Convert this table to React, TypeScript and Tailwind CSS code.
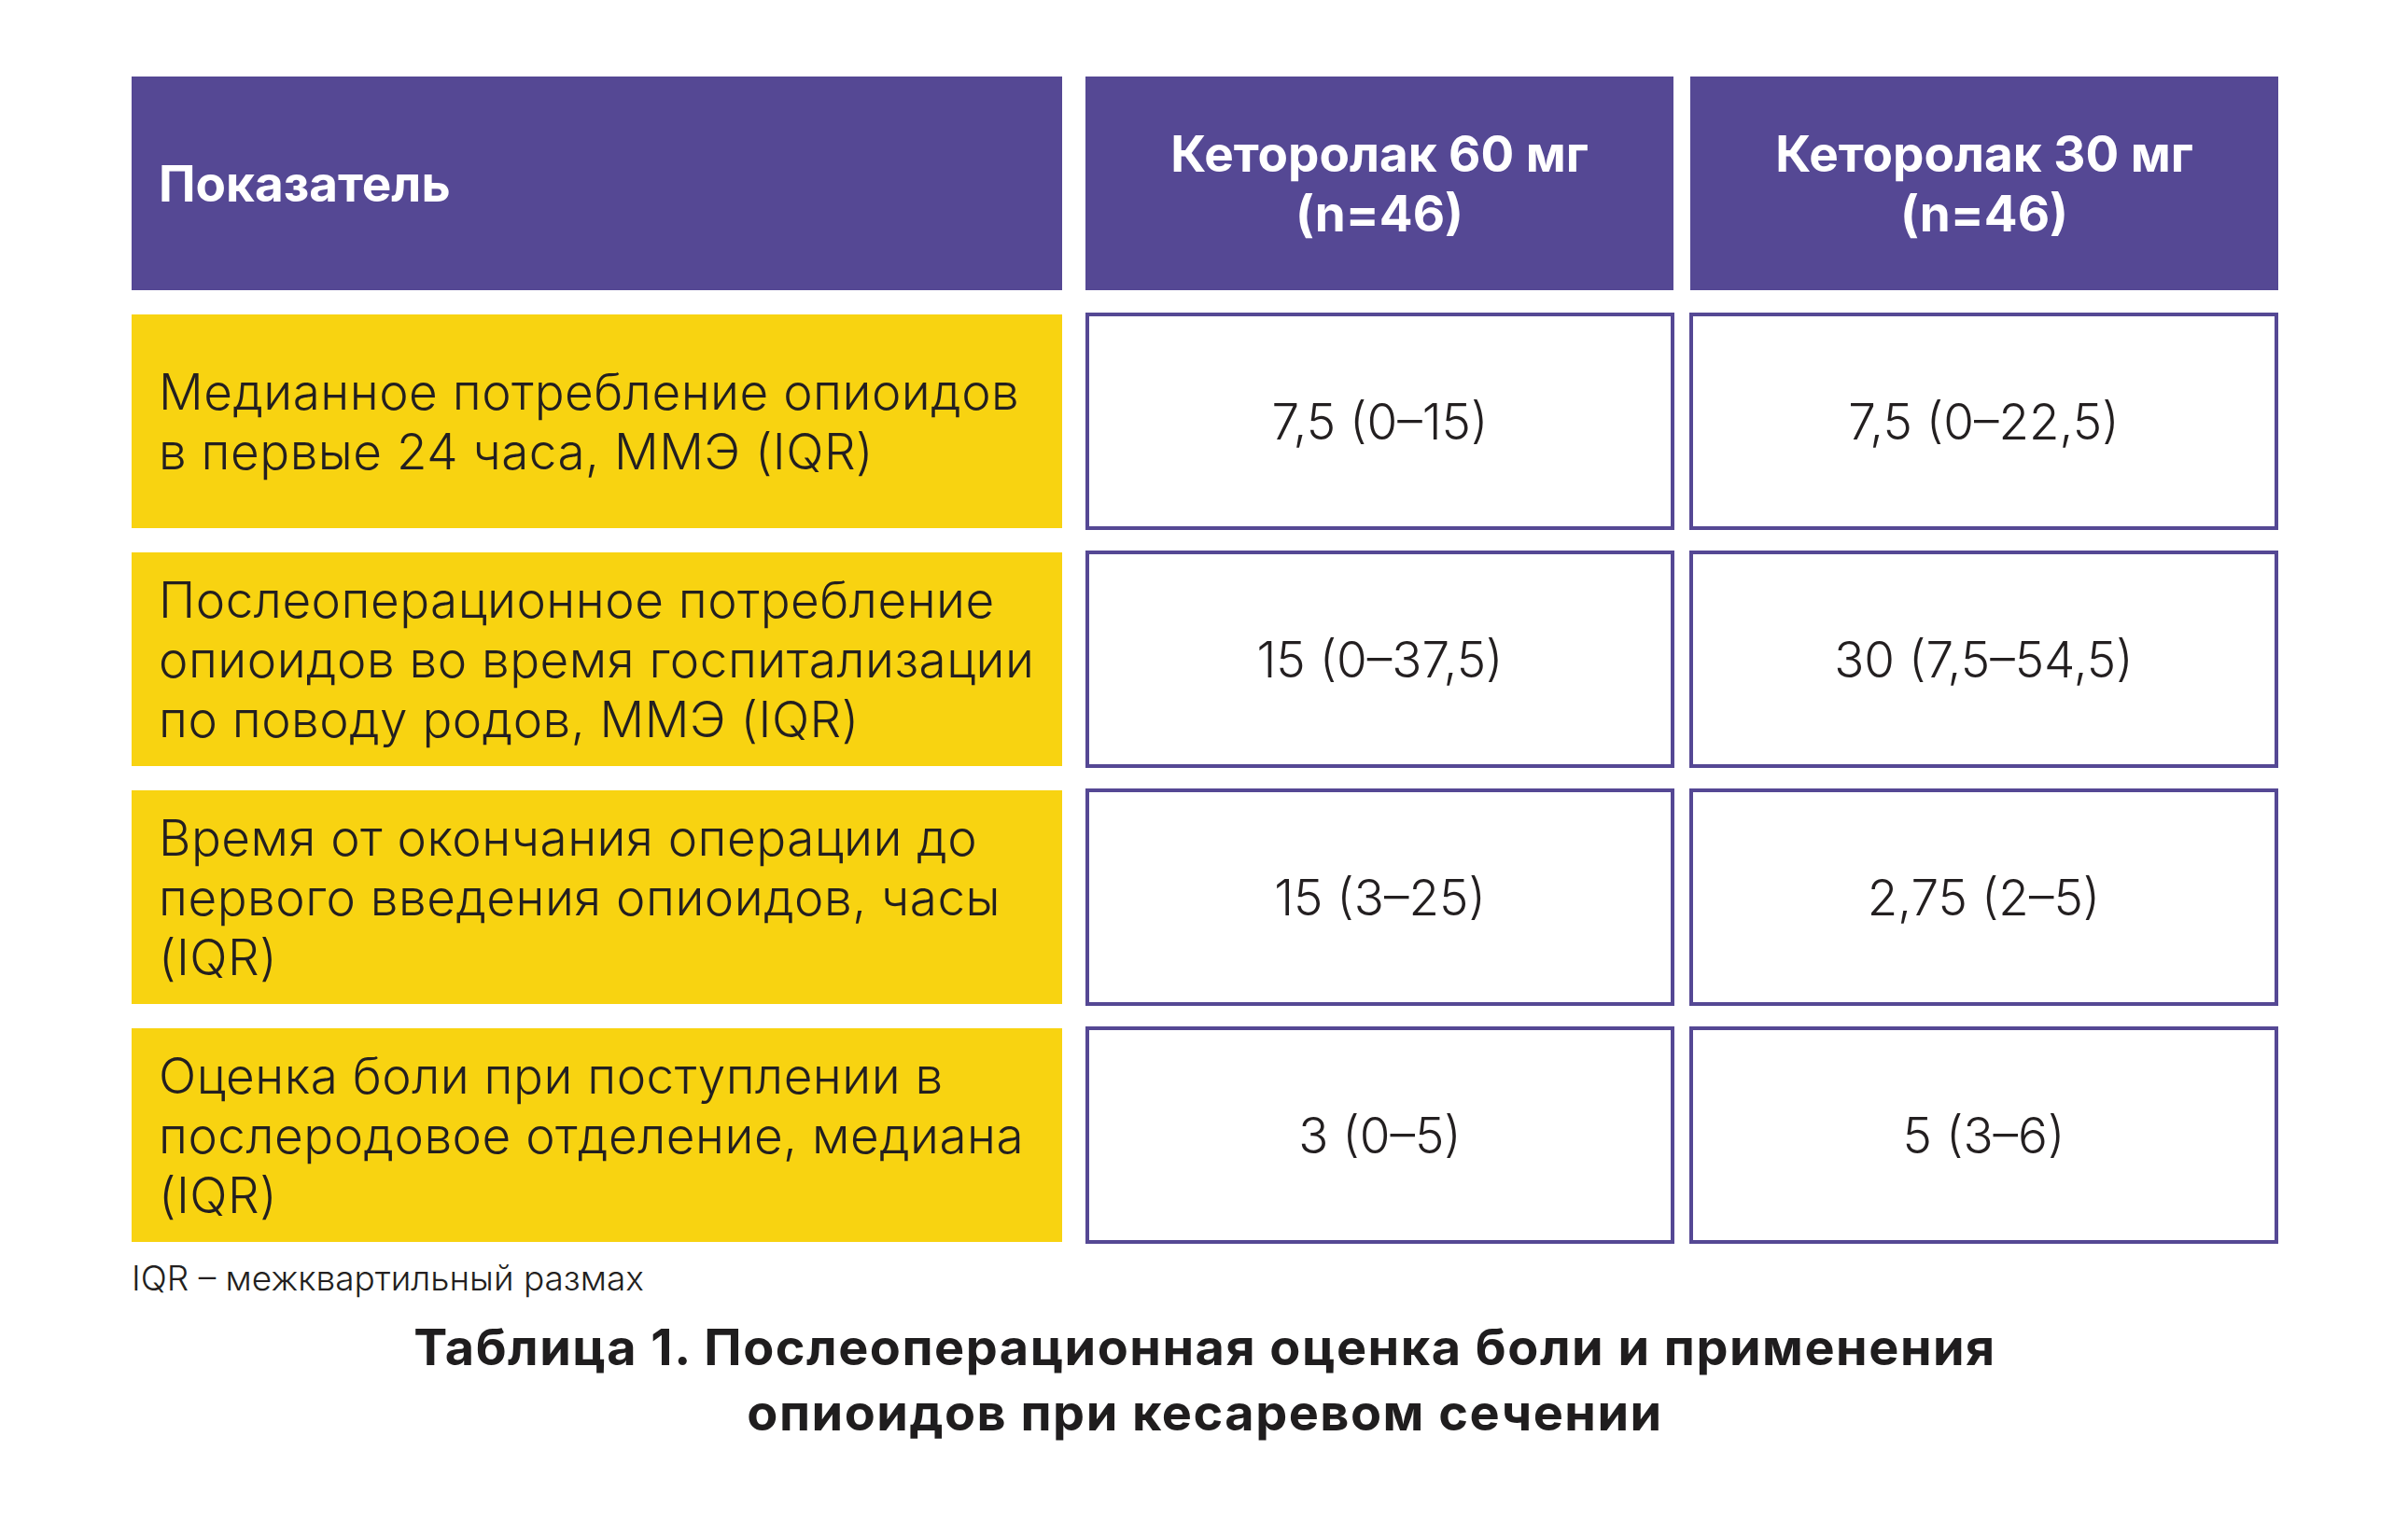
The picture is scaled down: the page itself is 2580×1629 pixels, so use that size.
const rows = [
  {
    label: ['Медианное потребление опиоидов', 'в первые 24 часа, ММЭ (IQR)'],
    a: '7,5 (0–15)',
    b: '7,5 (0–22,5)',
  },
  {
    label: ['Послеоперационное потребление', 'опиоидов во время госпитализации', 'по поводу родов, ММЭ (IQR)'],
    a: '15 (0–37,5)',
    b: '30 (7,5–54,5)',
  },
  {
    label: ['Время от окончания операции до', 'первого введения опиоидов, часы', '(IQR)'],
    a: '15 (3–25)',
    b: '2,75 (2–5)',
  },
  {
    label: ['Оценка боли при поступлении в', 'послеродовое отделение, медиана', '(IQR)'],
    a: '3 (0–5)',
    b: '5 (3–6)',
  },
];

function ValueCell({ value }: { value: string }) {
  return (
    <div className="w-[631px] h-[233px] shrink-0 border-4 border-[#554894] bg-white flex items-center justify-center text-[53px] leading-[64px] font-light text-[#231f20]">
      {value}
    </div>
  );
}

export default function App() {
  return (
    <div className="min-h-[1629px] w-full bg-white font-['Inter','Noto_Sans',sans-serif] pt-[82px]">
      <div className="w-[2300px] ml-[141px] flex flex-col gap-[26px]">
        {/* Header */}
        <div className="flex h-[229px] text-white font-bold text-[53px] leading-[64px]">
          <div className="w-[997px] shrink-0 bg-[#554894] flex items-center pl-[29px]">Показатель</div>
          <div className="w-[630px] shrink-0 ml-[25px] bg-[#554894] flex flex-col items-center justify-center text-center">
            <span>Кеторолак 60 мг</span>
            <span>(n=46)</span>
          </div>
          <div className="w-[630px] shrink-0 ml-[18px] bg-[#554894] flex flex-col items-center justify-center text-center">
            <span>Кеторолак 30 мг</span>
            <span>(n=46)</span>
          </div>
        </div>

        {rows.map((row) => (
          <div key={row.label[0]} className="flex h-[229px] items-center">
            <div className="w-[997px] h-[229px] shrink-0 bg-[#f8d311] flex flex-col justify-center pl-[29px] text-[53px] leading-[64px] font-light tracking-[0.5px] text-[#231f20]">
              {row.label.map((line) => (
                <span key={line} className="whitespace-nowrap">
                  {line}
                </span>
              ))}
            </div>
            <div className="ml-[25px]">
              <ValueCell value={row.a} />
            </div>
            <div className="ml-[16px]">
              <ValueCell value={row.b} />
            </div>
          </div>
        ))}
      </div>

      <div className="w-[2300px] ml-[141px]">
        <p className="mt-[17px] text-[37px] leading-[44px] font-light text-[#231f20]">IQR – межквартильный размах</p>
        <p className="mt-[17px] text-center text-[54px] leading-[70px] font-bold tracking-[1.5px] text-[#1f1d1e]">
          Таблица 1. Послеоперационная оценка боли и применения
          <br />
          опиоидов при кесаревом сечении
        </p>
      </div>
    </div>
  );
}
